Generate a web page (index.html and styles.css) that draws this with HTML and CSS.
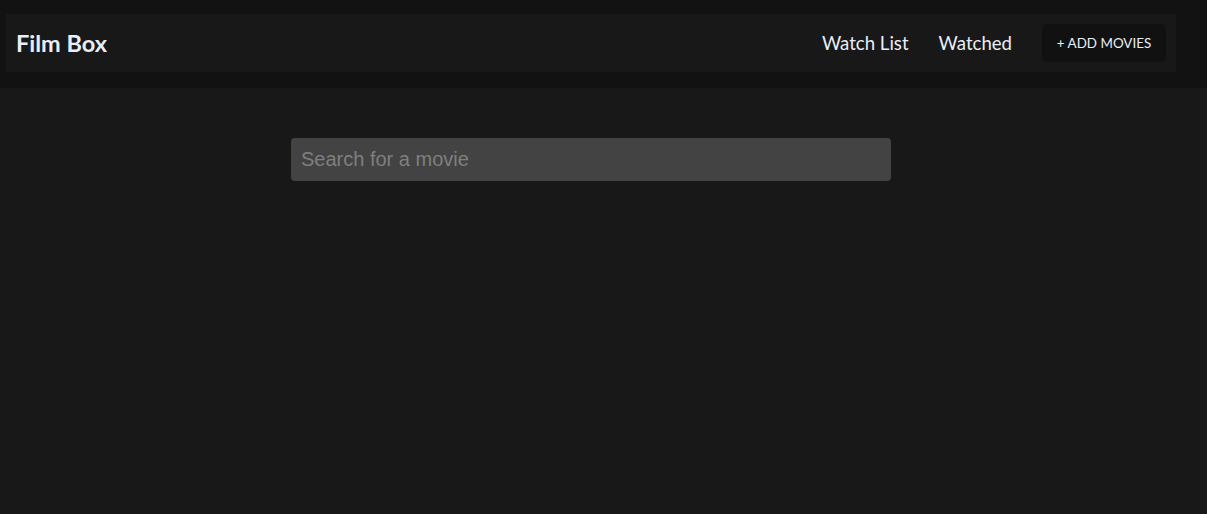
FILE: index.html
```html
<!DOCTYPE html>
<html lang="en">
<head>
<meta charset="utf-8">
<title>Film Box</title>
<link rel="stylesheet" href="styles.css">
</head>
<body>
<header class="header">
  <nav class="navbar">
    <a class="brand" href="#">Film Box</a>
    <ul class="nav-links">
      <li><a class="nav-link" href="#">Watch List</a></li>
      <li><a class="nav-link" href="#">Watched</a></li>
      <li><a class="btn-add" href="#">+ Add Movies</a></li>
    </ul>
  </nav>
</header>
<main class="main">
  <div class="search-wrap">
    <input class="search" type="text" placeholder="Search for a movie">
  </div>
</main>
</body>
</html>
```
FILE: styles.css
```css
* { box-sizing: border-box; }
html, body { margin: 0; padding: 0; }
body {
  background: #181818;
  color: #e8eef7;
  font-family: Lato, "Open Sans", sans-serif;
  min-height: 514px;
}
a { text-decoration: none; color: inherit; }
.header {
  background: #121212;
  padding: 14px 0 16px;
}
.navbar {
  width: 1170px;
  margin-left: 6px;
  height: 58px;
  background: #181818;
  display: flex;
  align-items: center;
  justify-content: space-between;
  padding: 0 10px;
}
.brand {
  font-weight: 700;
  font-size: 23.5px;
  color: #e8eef7;
  letter-spacing: 0;
}
.nav-links {
  list-style: none;
  margin: 0;
  padding: 0;
  display: flex;
  align-items: center;
}
.nav-link {
  font-size: 18.6px;
  margin-right: 30px;
  color: #e8eef7;
}
.btn-add {
  display: block;
  background: #111111;
  border-radius: 5px;
  width: 124px;
  text-align: center;
  height: 38px;
  line-height: 38px;
  font-size: 13.4px;
  text-transform: uppercase;
  color: #e8eef7;
}
.main {
  width: 1170px;
  margin-left: 6px;
  padding-top: 50px;
}
.search-wrap {
  display: flex;
  justify-content: center;
}
.search {
  width: 600px;
  height: 43px;
  background: #434343;
  border: none;
  border-radius: 4px;
  padding: 0 10px;
  font-family: "Liberation Sans", Arial, sans-serif;
  font-size: 20px;
  color: #ddd;
  outline: none;
}
.search::placeholder { color: #7f7f7f; }
```
